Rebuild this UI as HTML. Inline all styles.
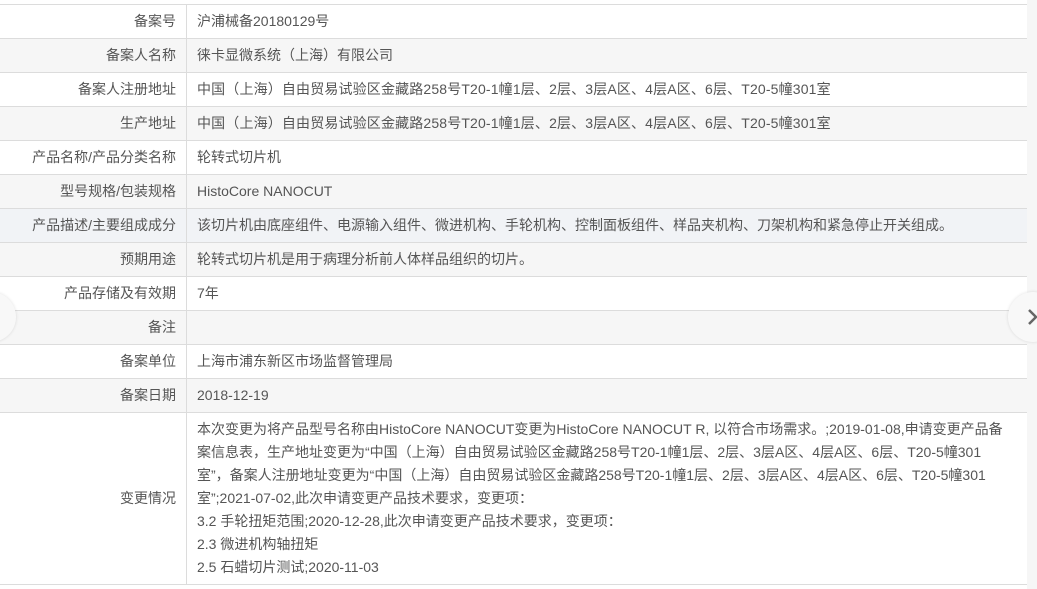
<!DOCTYPE html>
<html><head><meta charset="utf-8"><style>
body{margin:0;width:1037px;height:589px;overflow:hidden;background:#fff;font-family:"Liberation Sans","Noto Sans CJK SC",sans-serif;font-size:14px;color:#555;position:relative}
table{position:absolute;left:0;top:4px;width:1027px;border-collapse:collapse}
td{border-top:1px solid #dcdcdc;border-bottom:1px solid #dcdcdc;height:33px;padding:0 10px;line-height:23px;white-space:nowrap}
td.l{width:166px;text-align:right;border-right:1px solid #dcdcdc}
tr.g td{background:#f6f6f6}
tr.h td{background:#f1f3f6}
.sb{position:absolute;left:1027px;top:0;width:10px;height:589px;background:#f6f6f6}
.c{position:absolute;width:50px;height:50px;border-radius:50%;background:#f8f8f8;box-shadow:0 0 3px rgba(0,0,0,.12)}
.w{letter-spacing:0.15px}
</style></head><body>
<div class="sb"></div>
<table>
<tr><td class="l">备案号</td><td>沪浦械备20180129号</td></tr>
<tr class="g"><td class="l">备案人名称</td><td>徕卡显微系统（上海）有限公司</td></tr>
<tr><td class="l">备案人注册地址</td><td class="w">中国（上海）自由贸易试验区金藏路258号T20-1幢1层、2层、3层A区、4层A区、6层、T20-5幢301室</td></tr>
<tr class="g"><td class="l">生产地址</td><td class="w">中国（上海）自由贸易试验区金藏路258号T20-1幢1层、2层、3层A区、4层A区、6层、T20-5幢301室</td></tr>
<tr><td class="l">产品名称/产品分类名称</td><td>轮转式切片机</td></tr>
<tr class="g"><td class="l">型号规格/包装规格</td><td>HistoCore NANOCUT</td></tr>
<tr class="h"><td class="l">产品描述/主要组成成分</td><td>该切片机由底座组件、电源输入组件、微进机构、手轮机构、控制面板组件、样品夹机构、刀架机构和紧急停止开关组成。</td></tr>
<tr class="g"><td class="l">预期用途</td><td>轮转式切片机是用于病理分析前人体样品组织的切片。</td></tr>
<tr><td class="l">产品存储及有效期</td><td>7年</td></tr>
<tr class="g"><td class="l">备注</td><td></td></tr>
<tr><td class="l">备案单位</td><td>上海市浦东新区市场监督管理局</td></tr>
<tr class="g"><td class="l">备案日期</td><td>2018-12-19</td></tr>
<tr><td class="l" style="height:171px">变更情况</td><td style="padding-top:5px;padding-bottom:5px">本次变更为将产品型号名称由HistoCore NANOCUT变更为HistoCore NANOCUT R, 以符合市场需求。;2019-01-08,申请变更产品备<br>案信息表，生产地址变更为“中国（上海）自由贸易试验区金藏路258号T20-1幢1层、2层、3层A区、4层A区、6层、T20-5幢301<br>室”，备案人注册地址变更为“中国（上海）自由贸易试验区金藏路258号T20-1幢1层、2层、3层A区、4层A区、6层、T20-5幢301<br>室”;2021-07-02,此次申请变更产品技术要求，变更项：<br>3.2 手轮扭矩范围;2020-12-28,此次申请变更产品技术要求，变更项：<br>2.3 微进机构轴扭矩<br>2.5 石蜡切片测试;2020-11-03</td></tr>
</table>
<div class="c" style="left:-34px;top:292px"></div>
<div class="c" style="left:1008px;top:292px"><svg width="50" height="50" style="position:absolute;left:0;top:0"><polyline points="21,18 28,25 21,32" fill="none" stroke="#666" stroke-width="2.5"/></svg></div>
</body></html>
